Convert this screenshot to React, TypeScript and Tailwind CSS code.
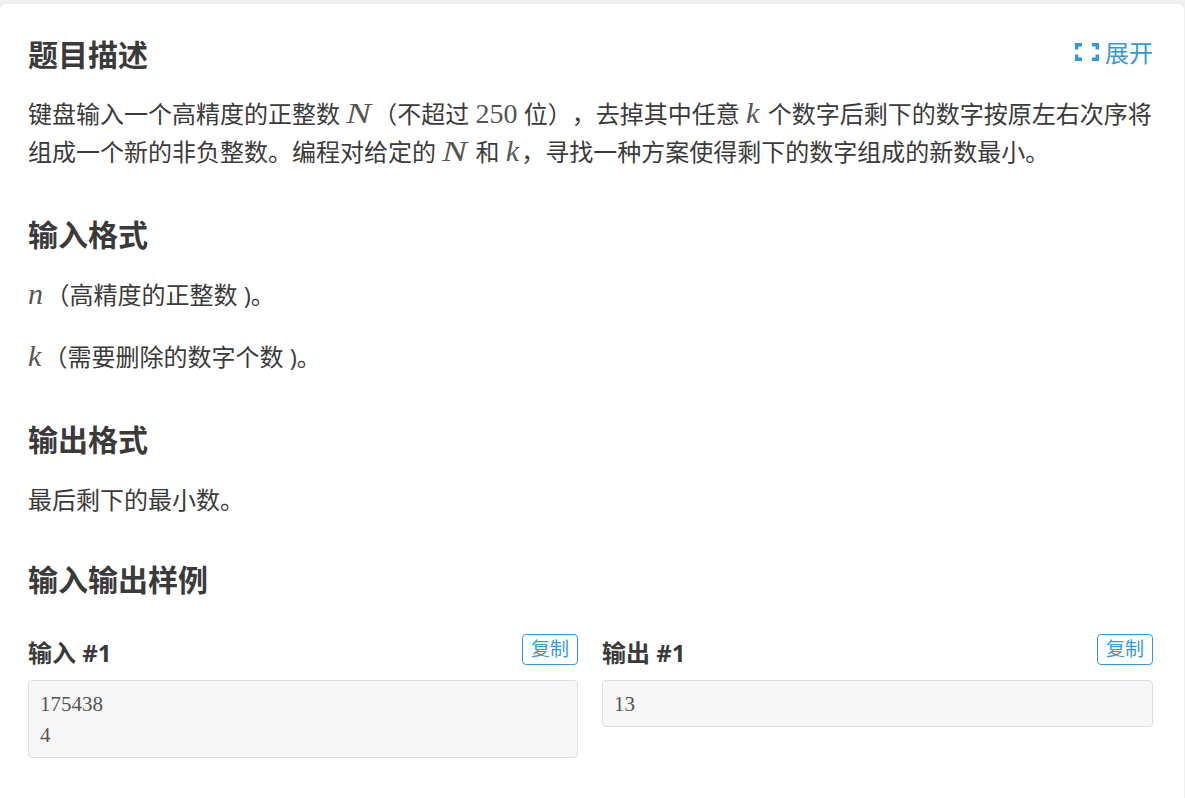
const sans = "font-['Open_Sans','Noto_Sans_CJK_SC',sans-serif]";

function M({ children, className }: { children: React.ReactNode; className: string }) {
  return (
    <span className={`inline-block leading-none font-['Liberation_Serif',serif] italic text-[30px] text-[#555] ${className}`}>
      {children}
    </span>
  );
}

function Digits({ children }: { children: React.ReactNode }) {
  return <span className="leading-none font-['Liberation_Serif',serif] text-[28px] text-[#555]">{children}</span>;
}

function BigN() {
  return (
    <M className="w-[27px]">
      <span className="inline-block origin-left scale-x-[1.25]">N</span>
    </M>
  );
}

const K = () => <M className="w-[15.5px]">k</M>;

function Sample({ title, lines, className }: { title: string; lines: string[]; className: string }) {
  return (
    <div className={className}>
      <div className="flex items-center justify-between h-[30px] mb-[16px]">
        <h3 className="text-[24px] font-bold leading-[36px] mt-[7px] text-[#3a3a3a]">{title}</h3>
        <button className="h-[31px] w-[56px] border border-[#3498db] rounded-[4px] text-[#3498db] text-[19px] leading-none">
          复制
        </button>
      </div>
      <pre className="border border-[#dedede] bg-[#f7f7f7] rounded-[4px] px-[11px] pt-[8px] pb-[6px] font-['Liberation_Serif',serif] text-[21px] leading-[31px] text-[#555]">
        {lines.join('\n')}
      </pre>
    </div>
  );
}

export default function App() {
  return (
    <div className={`min-h-[798px] bg-[#efefef] pt-[4px] pr-[1px] overflow-hidden [text-spacing-trim:space-all] ${sans}`}>
      <div className="bg-white rounded-t-[6px] h-[794px] pt-[33px] pl-[28px] pr-[31px] text-[24px] leading-[38px] text-[#3a3a3a]">
        <div className="flex items-center justify-between">
          <h2 className="text-[30px] leading-[36px] font-bold">题目描述</h2>
          <button className="flex items-center gap-[6px] mb-[4px] text-[#3498db] text-[24px] leading-[32px]">
            <svg className="mb-[2px]" width="24" height="18" viewBox="0 0 24 18" fill="none" stroke="#3498db" strokeWidth="3.4">
              <path d="M1.7 6.5V1.7H7M17 1.7H22.3V6.5M22.3 11.5V16.3H17M7 16.3H1.7V11.5" />
            </svg>
            展开
          </button>
        </div>
        <p className="mt-[22px]">
          键盘输入一个高精度的正整数 <BigN />（不超过 <Digits>250</Digits> 位），去掉其中任意 <K /> 个数字后剩下的数字按原左右次序将组成一个新的非负整数。编程对给定的 <BigN /> 和 <K />，寻找一种方案使得剩下的数字组成的新数最小。
        </p>
        <h2 className="mt-[46px] text-[30px] leading-[36px] font-bold">输入格式</h2>
        <p className="mt-[23px]"><M className="w-[17.5px]">n</M>（高精度的正整数 )。</p>
        <p className="mt-[24px]"><K />（需要删除的数字个数 )。</p>
        <h2 className="mt-[46px] text-[30px] leading-[36px] font-bold">输出格式</h2>
        <p className="mt-[23px]">最后剩下的最小数。</p>
        <h2 className="mt-[43px] text-[30px] leading-[36px] font-bold">输入输出样例</h2>
        <div className="mt-[36px] flex gap-[24px]">
          <Sample className="w-[550px] shrink-0" title="输入 #1" lines={['175438', '4']} />
          <Sample className="flex-1 min-w-0" title="输出 #1" lines={['13']} />
        </div>
      </div>
    </div>
  );
}
